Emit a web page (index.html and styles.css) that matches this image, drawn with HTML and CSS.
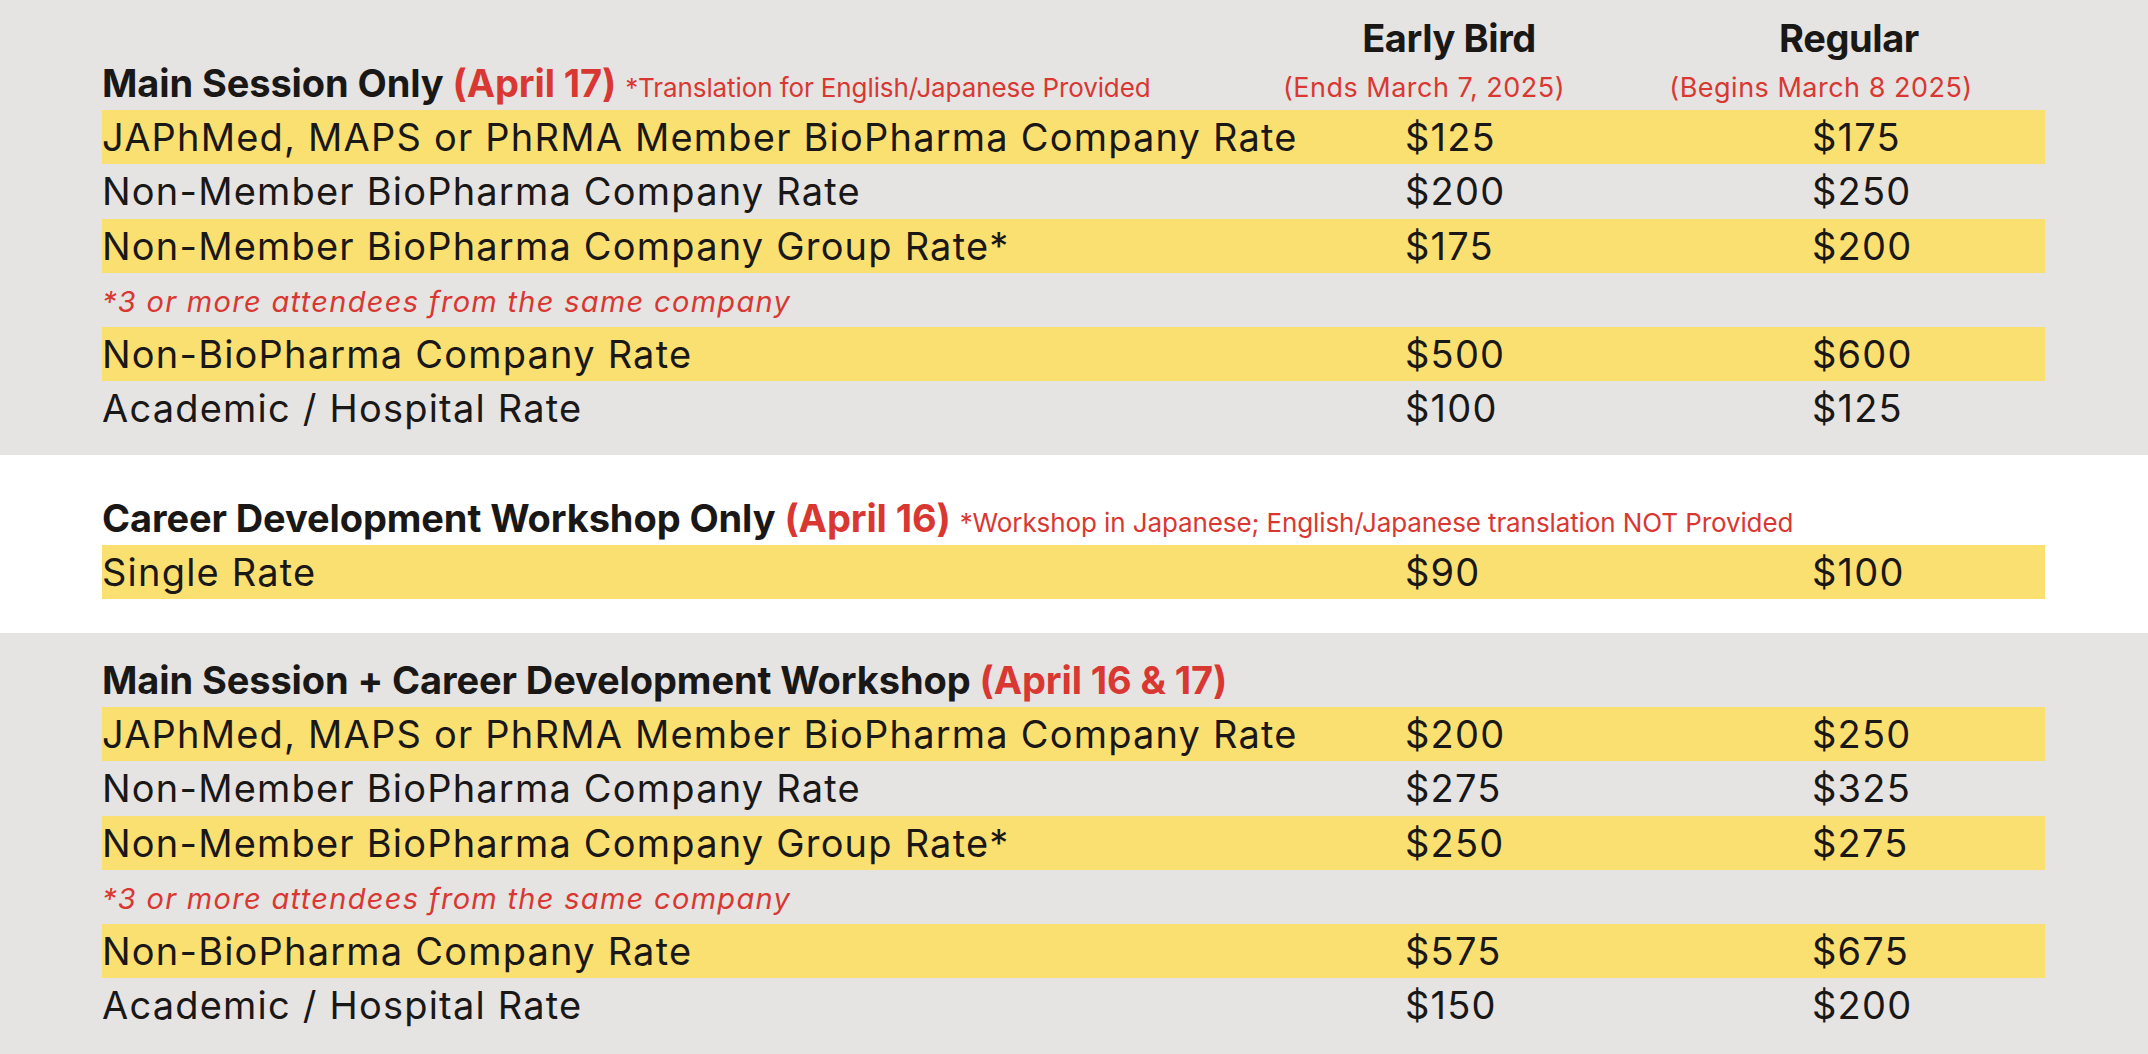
FILE: index.html
```html
<!DOCTYPE html>
<html lang="en">
<head>
<meta charset="utf-8">
<title>Registration Fees</title>
<link rel="stylesheet" href="styles.css">
</head>
<body>
<main class="pricing">
  <section class="block block--gray block--first">
    <div class="head">
      <div class="head__blank"></div>
      <div class="head__col">Early Bird</div>
      <div class="head__col">Regular</div>
      <h2 class="title">Main Session Only <span class="title__date">(April 17)</span> <span class="title__note">*Translation for English/Japanese Provided</span></h2>
      <div class="head__sub head__sub--early">(Ends March 7, 2025)</div>
      <div class="head__sub head__sub--regular">(Begins March 8 2025)</div>
    </div>
    <div class="rows">
      <div class="row row--hl"><span class="row__label">JAPhMed, MAPS or PhRMA Member BioPharma Company Rate</span><span class="row__price">$125</span><span class="row__price">$175</span></div>
      <div class="row"><span class="row__label">Non-Member BioPharma Company Rate</span><span class="row__price">$200</span><span class="row__price">$250</span></div>
      <div class="row row--hl"><span class="row__label">Non-Member BioPharma Company Group Rate*</span><span class="row__price">$175</span><span class="row__price">$200</span></div>
      <div class="row row--note"><span class="row__note">*3 or more attendees from the same company</span></div>
      <div class="row row--hl"><span class="row__label">Non-BioPharma Company Rate</span><span class="row__price">$500</span><span class="row__price">$600</span></div>
      <div class="row"><span class="row__label">Academic / Hospital Rate</span><span class="row__price">$100</span><span class="row__price">$125</span></div>
    </div>
  </section>

  <section class="block block--white block--second">
    <h2 class="title">Career Development Workshop Only <span class="title__date">(April 16)</span> <span class="title__note">*Workshop in Japanese; English/Japanese translation NOT Provided</span></h2>
    <div class="rows">
      <div class="row row--hl"><span class="row__label">Single Rate</span><span class="row__price">$90</span><span class="row__price">$100</span></div>
    </div>
  </section>

  <section class="block block--gray block--third">
    <h2 class="title">Main Session + Career Development Workshop <span class="title__date">(April 16 &amp; 17)</span></h2>
    <div class="rows">
      <div class="row row--hl"><span class="row__label">JAPhMed, MAPS or PhRMA Member BioPharma Company Rate</span><span class="row__price">$200</span><span class="row__price">$250</span></div>
      <div class="row"><span class="row__label">Non-Member BioPharma Company Rate</span><span class="row__price">$275</span><span class="row__price">$325</span></div>
      <div class="row row--hl"><span class="row__label">Non-Member BioPharma Company Group Rate*</span><span class="row__price">$250</span><span class="row__price">$275</span></div>
      <div class="row row--note"><span class="row__note">*3 or more attendees from the same company</span></div>
      <div class="row row--hl"><span class="row__label">Non-BioPharma Company Rate</span><span class="row__price">$575</span><span class="row__price">$675</span></div>
      <div class="row"><span class="row__label">Academic / Hospital Rate</span><span class="row__price">$150</span><span class="row__price">$200</span></div>
    </div>
  </section>
</main>
</body>
</html>
```

FILE: styles.css
```css
* { box-sizing: border-box; }

html, body {
  margin: 0;
  padding: 0;
  background: #ffffff;
}

body {
  font-family: Inter, "Noto Sans", "Liberation Sans", sans-serif;
  color: #1a1817;
}

.pricing {
  width: 2148px;
}

.block {
  padding-left: 102px;
  padding-right: 103px;
}

.block--gray { background: #e5e4e2; }
.block--white { background: #ffffff; }

.block--first { padding-top: 16px; padding-bottom: 19.5px; }
.block--second { padding-top: 40px; padding-bottom: 33.75px; }
.block--third { padding-top: 24px; padding-bottom: 21.5px; }

/* header grid */
.head {
  display: grid;
  grid-template-columns: 1fr 360px 360px;
  column-gap: 40px;
  padding-right: 16px;
  align-items: baseline;
}

.head__col {
  font-weight: 700;
  font-size: 38px;
  line-height: 44px;
  letter-spacing: -0.4px;
  text-align: center;
}

.head__sub {
  color: #d93832;
  font-size: 27px;
  line-height: 38px;
  letter-spacing: 0.5px;
  text-align: center;
  white-space: nowrap;
}

.head__sub--early { padding-right: 50px; }
.head__sub--regular { padding-right: 56px; }

.title {
  margin: 0 0 4px 0;
  height: 46px;
  font-weight: 700;
  font-size: 38px;
  line-height: 46px;
  letter-spacing: -0.1px;
  white-space: nowrap;
}

.head .title { margin-bottom: 0; }
.head + .rows { margin-top: 3px; }

.title__date { color: #d93832; }

.title__note {
  color: #d93832;
  font-weight: 400;
  font-size: 26px;
  line-height: 26px;
  letter-spacing: -0.1px;
}

/* rows */
.row {
  display: grid;
  grid-template-columns: 1303px 407px 1fr;
  height: 54.25px;
  font-size: 38px;
  line-height: 54.25px;
  letter-spacing: 1.2px;
  white-space: nowrap;
}

.row--hl { background: #fae070; }

.row--note {
  display: block;
  padding-top: 4px;
  font-size: 29px;
  line-height: 50px;
}

.row__note {
  color: #d93832;
  font-style: italic;
  font-size: 29px;
  letter-spacing: 1.3px;
}
```
